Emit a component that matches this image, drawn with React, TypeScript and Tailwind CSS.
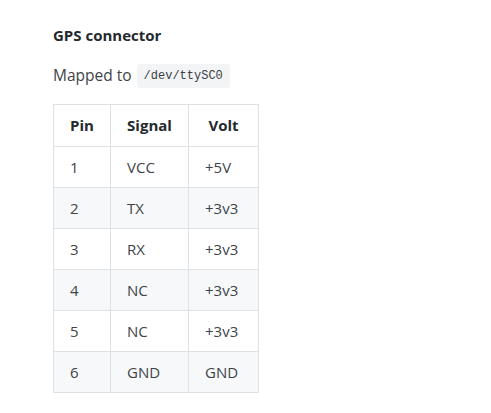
import React from "react";

const rows = [
  ["1", "VCC", "+5V"],
  ["2", "TX", "+3v3"],
  ["3", "RX", "+3v3"],
  ["4", "NC", "+3v3"],
  ["5", "NC", "+3v3"],
  ["6", "GND", "GND"],
];

export default function App() {
  return (
    <div
      className="w-[491px] h-[413px] bg-white pl-[53px] pt-[25px] text-[#24292e]"
      style={{ fontFamily: '"Open Sans", "Noto Sans", sans-serif' }}
    >
      <div className="text-[15px] font-bold leading-[20px]">GPS connector</div>
      <div className="mt-[19px] flex items-center h-[24px] text-[15.5px] text-[#404448]">
        <span>Mapped to</span>
        <code
          className="ml-[5px] h-[24px] px-[7px] flex items-center rounded-[3px] bg-[#f3f4f5] text-[12px] text-[#3a3f44]"
          style={{ fontFamily: '"Liberation Mono", monospace' }}
        >
          /dev/ttySC0
        </code>
      </div>
      <table className="mt-[16px] border-collapse text-[15px]">
        <thead>
          <tr className="h-[42px]">
            <th className="w-[57px] border border-[#dfe2e5] font-bold text-center text-[#24292e]">Pin</th>
            <th className="w-[78px] border border-[#dfe2e5] font-bold text-center text-[#24292e]">Signal</th>
            <th className="w-[70px] border border-[#dfe2e5] font-bold text-center text-[#24292e]">Volt</th>
          </tr>
        </thead>
        <tbody>
          {rows.map((r, i) => (
            <tr key={i} className={i % 2 === 1 ? "h-[41px] bg-[#f6f8fa]" : "h-[41px] bg-white"}>
              {r.map((c, j) => (
                <td key={j} className="border border-[#dfe2e5] pl-[16px] text-left font-normal text-[#404448]">
                  {c}
                </td>
              ))}
            </tr>
          ))}
        </tbody>
      </table>
    </div>
  );
}
